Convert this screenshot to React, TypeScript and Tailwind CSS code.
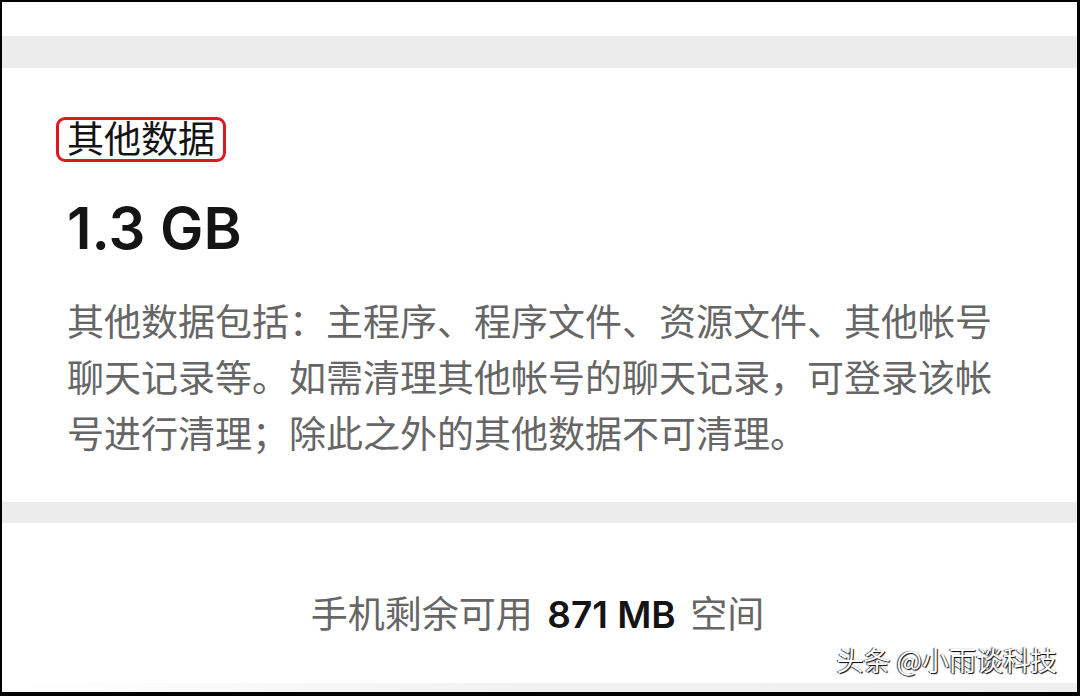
import React from 'react';

const CJK = "font-['Inter','Noto_Sans_CJK_SC',sans-serif]";

export default function App() {
    return (
        <div className="relative flex h-[696px] w-[1080px] flex-col overflow-hidden border-t-2 border-r-[3px] border-b-4 border-l-2 border-black bg-white">
            {/* top spacer + divider band */}
            <div className="h-[34px] shrink-0 bg-white" />
            <div className="h-[32px] shrink-0 bg-[#ececec]" />

            {/* Other data card */}
            <section className={`flex h-[434px] shrink-0 flex-col items-start bg-white pt-[49px] pl-[54px] ${CJK}`}>
                <span className="rounded-[9px] border-[3px] border-[#dc1820] px-[8px] text-[37px] leading-[39px] text-[#141414]">
                    其他数据
                </span>
                <div className="mt-[31px] pl-[11px] font-['Inter',sans-serif] text-[58px] leading-[70px] font-semibold text-[#141414]">
                    1.3 GB
                </div>
                <p className="mt-[32px] w-[945px] pl-[11px] text-[37px] leading-[56px] text-[#666666]">
                    其他数据包括：主程序、程序文件、资源文件、其他帐号聊天记录等。如需清理其他帐号的聊天记录，可登录该帐号进行清理；除此之外的其他数据不可清理。
                </p>
            </section>

            <div className="h-[21px] shrink-0 bg-[#ececec]" />

            {/* free space */}
            <div className={`flex flex-1 justify-center bg-white pt-[64px] pr-[4px] ${CJK}`}>
                <p className="text-[37px] leading-[56px] text-[#666666]">
                    手机剩余可用 <span className="mx-[4px] font-semibold text-[#141414]">871 MB</span> 空间
                </p>
            </div>
            <div className="h-[9px] shrink-0 bg-gradient-to-r from-white via-[#f1f1f1] to-[#efefef]" />

            {/* watermark */}
            <div className="absolute right-[20px] bottom-[14px] font-['Noto_Sans_CJK_SC',sans-serif] text-[27px] leading-[36px] text-white [text-shadow:1px_1px_1px_#000,-1px_0_1px_#333]">
                头条 @小雨谈科技
            </div>
        </div>
    );
}
